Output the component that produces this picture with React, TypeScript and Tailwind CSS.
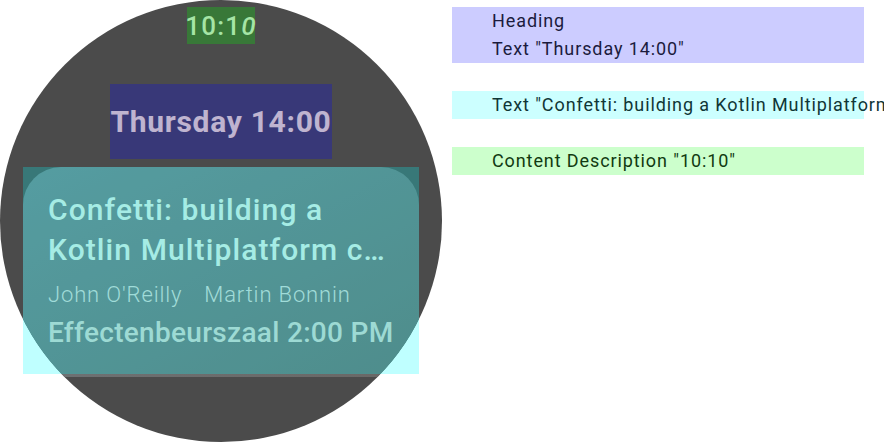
const font = { fontFamily: 'Roboto, "Noto Sans", sans-serif' }

const legend = [
  { lines: ['Heading', 'Text "Thursday 14:00"'], bg: 'bg-[#ccccff]', fg: 'text-[#1b1b3d]' },
  {
    lines: ['Text "Confetti: building a Kotlin Multiplatform conference app in 40min"'],
    bg: 'bg-[#ccffff]',
    fg: 'text-[#103636]',
  },
  { lines: ['Content Description "10:10"'], bg: 'bg-[#ccffcc]', fg: 'text-[#113a11]' },
]

function Watch() {
  return (
    <div className="relative w-[442px] h-[442px] shrink-0">
      {/* round screen */}
      <div className="w-full h-full rounded-full overflow-hidden bg-[#4b4b4b] flex flex-col items-center">
        <div className="mt-[7px] h-[37px] w-[68px] flex items-center justify-center text-[26px] font-medium tracking-[1.2px] text-[#dcdcdc] leading-none whitespace-nowrap">
          10:1<span className="italic">0</span>
        </div>

        <h1 className="mt-[40px] h-[75px] w-[222px] flex items-center justify-center text-[30px] font-bold tracking-[0.7px] text-[#fff0c0] whitespace-nowrap">
          Thursday 14:00
        </h1>

        <div className="mt-[8px] w-[396px] h-[210px] shrink-0 rounded-[38px] bg-gradient-to-br from-[#727c82] to-[#696765] px-[25px] pt-[23px]">
          <p className="text-[30px] leading-[40px] font-medium tracking-[1.1px] text-[#dde6dc]">
            <span className="block whitespace-nowrap">Confetti: building a</span>
            <span className="block whitespace-nowrap overflow-hidden text-ellipsis">
              Kotlin Multiplatform conference app in 40min
            </span>
          </p>
          <div className="mt-[10px] flex gap-[22px] text-[22px] leading-[30px] font-light tracking-[0.85px] text-[#d6d0cc] whitespace-nowrap">
            <span>John O'Reilly</span>
            <span>Martin Bonnin</span>
          </div>
          <p className="mt-[5px] text-[28px] leading-[36px] font-medium tracking-[0.3px] text-[#d2cec6] whitespace-nowrap">
            Effectenbeurszaal 2:00 PM
          </p>
        </div>
      </div>

      {/* accessibility overlays */}
      <div className="absolute left-[187px] top-[7px] w-[68px] h-[37px] bg-[rgba(0,255,0,0.25)]" />
      <div className="absolute left-[110px] top-[84px] w-[222px] h-[75px] bg-[rgba(0,0,255,0.25)]" />
      <div className="absolute left-[23px] top-[167px] w-[396px] h-[207px] bg-[rgba(0,255,255,0.25)]" />
    </div>
  )
}

export default function App() {
  return (
    <div className="w-[884px] h-[442px] overflow-hidden bg-white flex" style={font}>
      <Watch />
      <div className="ml-[10px] pt-[7px] w-[412px] shrink-0 flex flex-col gap-[28px]">
        {legend.map((item) => (
          <div
            key={item.lines[0]}
            className={`${item.bg} ${item.fg} pl-[40px] text-[18px] leading-[28px] tracking-[0.9px] whitespace-nowrap`}
          >
            {item.lines.map((l) => (
              <div key={l}>{l}</div>
            ))}
          </div>
        ))}
      </div>
    </div>
  )
}
